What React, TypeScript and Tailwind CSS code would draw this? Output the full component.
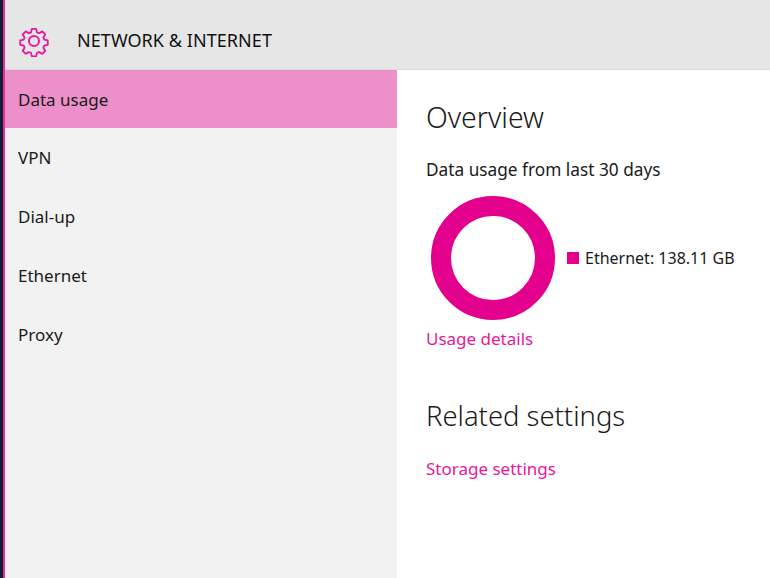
const NAV_ITEMS = ['Data usage', 'VPN', 'Dial-up', 'Ethernet', 'Proxy']

function GearIcon() {
  return (
    <svg width="32" height="32" viewBox="0 0 32 32" fill="none" stroke="#e9179b" strokeWidth="2" strokeLinejoin="round">
      <circle cx="16" cy="16" r="5" />
      <path d="M13.6 2.5h4.8l.9 3.9 2.4 1 3.4-2.1 3.4 3.4-2.1 3.4 1 2.4 3.9.9v4.8l-3.9.9-1 2.4 2.1 3.4-3.4 3.4-3.4-2.1-2.4 1-.9 3.9h-4.8l-.9-3.9-2.4-1-3.4 2.1-3.4-3.4 2.1-3.4-1-2.4-3.9-.9v-4.8l3.9-.9 1-2.4-2.1-3.4 3.4-3.4 3.4 2.1 2.4-1z" transform="translate(1.6 1.6) scale(0.9)" />
    </svg>
  )
}

export default function App() {
  return (
    <div className="flex h-[578px] w-[770px] overflow-hidden bg-white font-['Noto_Sans','Open_Sans',sans-serif] text-[#1a1a1a]">
      <div className="w-[3px] shrink-0 bg-[#10202f]" />
      <div className="w-[2px] shrink-0 bg-[#ec2aa5]" />
      <div className="flex min-w-0 flex-1 flex-col">
        <header className="flex h-[70px] shrink-0 items-center border-b border-[#dcdcdc] bg-[#e6e6e6] pl-[13px] pt-[12px]">
          <GearIcon />
          <h1 className="ml-[27px] text-[18px] font-normal tracking-[0.06px] text-[#111]">NETWORK &amp; INTERNET</h1>
        </header>
        <div className="flex min-h-0 flex-1">
          <nav className="w-[392px] shrink-0 bg-[#f2f2f2]">
            {NAV_ITEMS.map((item, i) => (
              <div
                key={item}
                className={`flex items-center pl-[13px] pt-px text-[17px] ${i === 0 ? 'h-[58px] bg-[#ed90c9]' : 'h-[59px]'}`}
              >
                {item}
              </div>
            ))}
          </nav>
          <main className="flex-1 pl-[29px] pt-[28px]">
            <h2 className="text-[28.4px] font-light leading-[38px]">Overview</h2>
            <p className="mt-[22px] text-[17.25px] leading-[24px]">Data usage from last 30 days</p>
            <div className="mt-[14px] flex items-center pl-[5px]">
              <div className="h-[124px] w-[124px] rounded-full border-[20px] border-[#e3008c]" />
              <span className="ml-3 h-3 w-3 bg-[#e3008c]" />
              <span className="ml-[6px] text-[16px]">Ethernet: 138.11 GB</span>
            </div>
            <a className="mt-[7px] block text-[17px] leading-[24px] text-[#e9179b]">Usage details</a>
            <h2 className="mt-[46px] text-[27.4px] font-light leading-[38px]">Related settings</h2>
            <a className="mt-[22px] block text-[17px] leading-[24px] text-[#e9179b]">Storage settings</a>
          </main>
        </div>
      </div>
    </div>
  )
}
